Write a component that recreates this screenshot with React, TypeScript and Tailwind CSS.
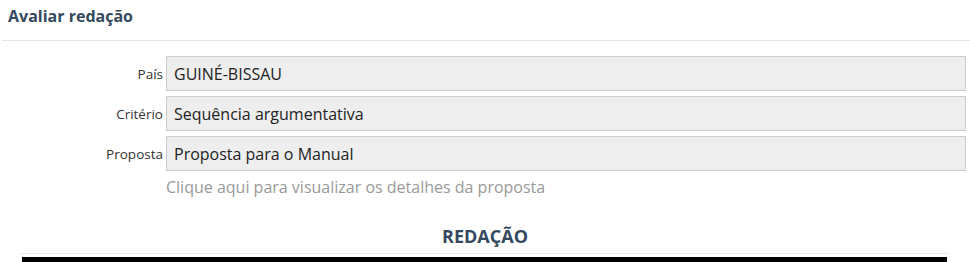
import React from 'react';

const fields = [
  { label: 'País', value: 'GUINÉ-BISSAU' },
  { label: 'Critério', value: 'Sequência argumentativa' },
  { label: 'Proposta', value: 'Proposta para o Manual' },
];

export default function App() {
  return (
    <div className="h-[262px] w-[970px] overflow-hidden bg-white font-['Open_Sans',sans-serif]">
      {/* Header */}
      <div className="ml-[2px] flex h-[41px] items-start border-b border-[#e5e5e5] pl-[6px] pt-[5px]">
        <h1 className="text-[16px] font-bold leading-[22px] text-[#34495e]">Avaliar redação</h1>
      </div>

      {/* Form */}
      <div className="mt-[15px] flex flex-col gap-[5px] pr-[4px]">
        {fields.map((f) => (
          <div key={f.label} className="flex items-center">
            <label className="w-[166px] pr-[3px] text-right text-[13.5px] leading-[18px] text-[#333]">
              {f.label}
            </label>
            <div className="flex h-[35px] flex-1 items-center border border-[#cccccc] bg-[#eeeeee] px-[7px] text-[16px] text-[#222]">
              {f.value}
            </div>
          </div>
        ))}
      </div>
      <div className="ml-[166px] mt-[5px] text-[16px] leading-[22px] text-[#999]">
        Clique aqui para visualizar os detalhes da proposta
      </div>

      {/* Redação */}
      <div className="mt-[26px] text-center text-[18px] font-bold leading-[24px] text-[#34495e]">
        REDAÇÃO
      </div>
      <div className="mx-[20px] mt-[5px] border-t border-[#ececec]" />
      <div className="ml-[22px] mr-[23px] mt-[3px] h-[10px] bg-black" />
    </div>
  );
}
